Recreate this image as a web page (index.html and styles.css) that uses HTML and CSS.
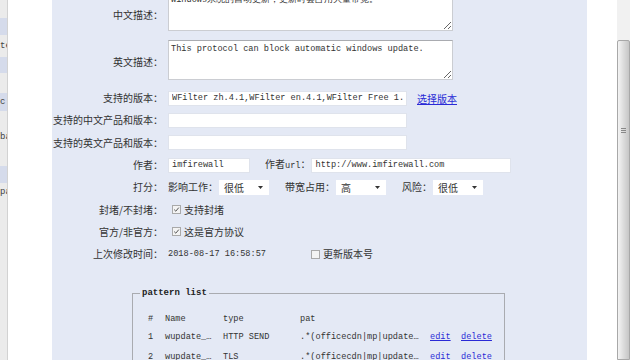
FILE: index.html
```
<html>
<head>
	<title>协议编辑</title>
	<meta http-equiv="content-type" content="text/html;charset=utf-8">
	<link rel="stylesheet" href="styles.css">
</head>
<body>
	<div class="page">
		<!-- 左侧菜单（被遮挡） -->
		<div class="side">
			<div class="item" style="height:18px"></div>
			<div class="item band" style="height:17px"></div>
			<div class="item" style="height:22px">te</div>
			<div class="item band" style="height:16px"></div>
			<div class="item" style="height:20px"></div>
			<div class="item band" style="height:18px">c</div>
			<div class="item" style="height:17px"></div>
			<div class="item" style="height:18px">ba</div>
			<div class="item" style="height:20px"></div>
			<div class="item band" style="height:17px"></div>
			<div class="item" style="height:18px">pa</div>
		</div>
		<div class="gutter"></div>
		<!-- 协议编辑区域 -->
		<div class="panel">
			<div class="row tall first">
				<div class="label">中文描述：</div>
				<textarea class="area">windows系统的自动更新，更新时会占用大量带宽。</textarea>
			</div>
			<div class="row tall second">
				<div class="label">英文描述：</div>
				<textarea class="area">This protocol can block automatic windows update.</textarea>
			</div>
			<div class="row">
				<div class="label">支持的版本：</div>
				<input class="text wide" type="text" value="WFilter zh.4.1,WFilter en.4.1,WFilter Free 1.0">
				<a class="link pick" href="#">选择版本</a>
			</div>
			<div class="row">
				<div class="label">支持的中文产品和版本：</div>
				<input class="text wide" type="text" value="">
			</div>
			<div class="row">
				<div class="label">支持的英文产品和版本：</div>
				<input class="text wide" type="text" value="">
			</div>
			<div class="row">
				<div class="label">作者：</div>
				<input class="text author" type="text" value="imfirewall">
				<span class="sub url">作者<span class="mono">url</span>：</span>
				<input class="text site" type="text" value="http://www.imfirewall.com">
			</div>
			<div class="row">
				<div class="label">打分：</div>
				<span class="sub">影响工作：</span>
				<div class="select"><span>很低</span><svg width="5" height="3"><path d="M0 0h5L2.5 3z" fill="#333"/></svg></div>
				<span class="sub gap">带宽占用：</span>
				<div class="select"><span>高</span><svg width="5" height="3"><path d="M0 0h5L2.5 3z" fill="#333"/></svg></div>
				<span class="sub gap">风险：</span>
				<div class="select"><span>很低</span><svg width="5" height="3"><path d="M0 0h5L2.5 3z" fill="#333"/></svg></div>
			</div>
			<div class="row">
				<div class="label">封堵/不封堵：</div>
				<span class="check"><svg width="9" height="9"><rect x="0.5" y="0.5" width="8" height="8" fill="#f3f3f3" stroke="#a9a9a9"/><path d="M2.2 4.6l1.6 1.6 3-3.6" fill="none" stroke="#555" stroke-width="1"/></svg>支持封堵</span>
			</div>
			<div class="row">
				<div class="label">官方/非官方：</div>
				<span class="check"><svg width="9" height="9"><rect x="0.5" y="0.5" width="8" height="8" fill="#f3f3f3" stroke="#a9a9a9"/><path d="M2.2 4.6l1.6 1.6 3-3.6" fill="none" stroke="#555" stroke-width="1"/></svg>这是官方协议</span>
			</div>
			<div class="row">
				<div class="label">上次修改时间：</div>
				<span class="mono">2018-08-17 16:58:57</span>
				<span class="check later"><svg width="9" height="9"><rect x="0.5" y="0.5" width="8" height="8" fill="#f3f3f3" stroke="#a9a9a9"/></svg>更新版本号</span>
			</div>
			<!-- 特征列表 -->
			<fieldset class="patterns">
				<legend>pattern list</legend>
				<table class="list">
					<tr class="head">
						<td class="c-no">#</td>
						<td class="c-name">Name</td>
						<td class="c-type">type</td>
						<td class="c-pat">pat</td>
						<td class="c-edit"></td>
						<td></td>
					</tr>
					<tr>
						<td class="c-no">1</td>
						<td class="c-name">wupdate_…</td>
						<td class="c-type">HTTP SEND</td>
						<td class="c-pat">.*(officecdn|mp|update…</td>
						<td class="c-edit"><a class="link" href="#">edit</a></td>
						<td><a class="link" href="#">delete</a></td>
					</tr>
					<tr>
						<td class="c-no">2</td>
						<td class="c-name">wupdate_…</td>
						<td class="c-type">TLS</td>
						<td class="c-pat">.*(officecdn|mp|update…</td>
						<td class="c-edit"><a class="link" href="#">edit</a></td>
						<td><a class="link" href="#">delete</a></td>
					</tr>
				</table>
			</fieldset>
		</div>
		<div class="gap-right"></div>
		<!-- 滚动条 -->
		<div class="scrollbar">
			<div class="thumb"><span class="grip"></span></div>
		</div>
	</div>
</body>
</html>
```
FILE: styles.css
```
body {
	margin: 0;
	background: #fff;
	font-family: "Noto Sans CJK SC", "Liberation Sans", sans-serif;
	font-size: 10px;
	color: #333;
}
.page {
	display: flex;
	width: 640px;
	height: 360px;
	overflow: hidden;
}
.side {
	width: 7px;
	border-right: 1px solid #d2d2d2;
	background: #ebebeb;
	overflow: hidden;
	flex-shrink: 0;
}
.side .item {
	font-family: "Liberation Mono", monospace;
	font-size: 9px;
	line-height: 18px;
	color: #444;
	white-space: nowrap;
	overflow: hidden;
	display: flex;
	align-items: center;
}
.side .band {
	background: #d5dbeb;
}
.gutter {
	width: 44px;
	flex-shrink: 0;
}
.panel {
	width: 535px;
	flex-shrink: 0;
	background: #e4e9f5;
	overflow: hidden;
}
.row {
	display: flex;
	align-items: center;
	height: 22.3px;
	white-space: nowrap;
}
.row.tall {
	height: 40px;
	align-items: flex-start;
}
.row.first {
	margin-top: -9px;
	margin-bottom: 9px;
}
.row.first .label {
	padding-top: 17px;
}
.row.second {
	margin-bottom: 7px;
}
.row.second .label {
	padding-top: 15px;
}
.label {
	width: 111px;
	margin-right: 5px;
	text-align: right;
	line-height: 14px;
	flex-shrink: 0;
}
.area {
	width: 285px;
	height: 40px;
	box-sizing: border-box;
	margin: 0;
	padding: 3px 2px;
	border: 1px solid #cbcdd2;
	border-top-color: #a9abb0;
	background: #fff;
	font-family: "Liberation Mono", monospace;
	font-size: 8.6px;
	line-height: 11px;
	color: #333;
	resize: both;
}
.mono {
	font-family: "Liberation Mono", monospace;
	font-size: 8.6px;
	color: #333;
}
.text {
	height: 15px;
	box-sizing: border-box;
	margin: 0;
	padding: 0 3px;
	border: 1px solid #dfe3ec;
	background: #fff;
	font-family: "Liberation Mono", monospace;
	font-size: 8.6px;
	color: #333;
	outline: none;
}
.wide {
	width: 239px;
}
.author {
	width: 82px;
}
.site {
	width: 200px;
}
.sub {
	line-height: 14px;
}
.url {
	margin-left: 15px;
	margin-right: 1px;
}
.gap {
	margin-left: 16px;
}
.link {
	color: #2a2ad6;
	text-decoration: underline;
}
.pick {
	margin-left: 10px;
}
.select {
	width: 50px;
	height: 15px;
	box-sizing: border-box;
	padding: 0 6px 0 5px;
	background: #fff;
	display: flex;
	align-items: center;
	justify-content: space-between;
	margin-left: 1px;
}
.check {
	display: flex;
	align-items: center;
	margin-left: 4px;
	line-height: 14px;
}
.check svg {
	margin-right: 3px;
}
.later {
	margin-left: 45px;
}
.patterns {
	width: 373px;
	box-sizing: border-box;
	margin: 22px 0 0 80px;
	padding: 0 0 60px 7px;
	border: 1px solid #a9abb0;
}
.patterns legend {
	padding: 0 2px;
	font-family: "Liberation Mono", monospace;
	font-size: 9px;
	font-weight: bold;
	color: #222;
	line-height: 12px;
}
.list {
	margin: 11px 0 0 8px;
	border-collapse: collapse;
	font-family: "Liberation Mono", monospace;
	font-size: 8.6px;
	color: #333;
}
.list td {
	padding: 0;
	height: 20px;
	white-space: nowrap;
}
.list .head td {
	height: 17px;
}
.c-no { width: 17px; }
.c-name { width: 58px; }
.c-type { width: 77px; }
.c-pat { width: 130px; }
.c-edit { width: 31px; }
.gap-right {
	width: 30px;
	flex-shrink: 0;
}
.scrollbar {
	width: 13px;
	flex-shrink: 0;
	background: #f1f1f1;
	display: flex;
	flex-direction: column;
	padding-top: 40px;
	box-sizing: border-box;
}
.thumb {
	flex: 1;
	border: 1px solid #a8a8a8;
	border-radius: 2px 2px 0 0;
	background: linear-gradient(to right, #f4f4f4, #dcdcdc 50%, #c6c6c6);
	display: flex;
	align-items: center;
	justify-content: center;
}
.grip {
	width: 5px;
	height: 5px;
	border-top: 1px solid #888;
	border-bottom: 1px solid #888;
	box-sizing: border-box;
	background: linear-gradient(#888, #888) center / 100% 1px no-repeat;
	margin-top: -140px;
}
```
